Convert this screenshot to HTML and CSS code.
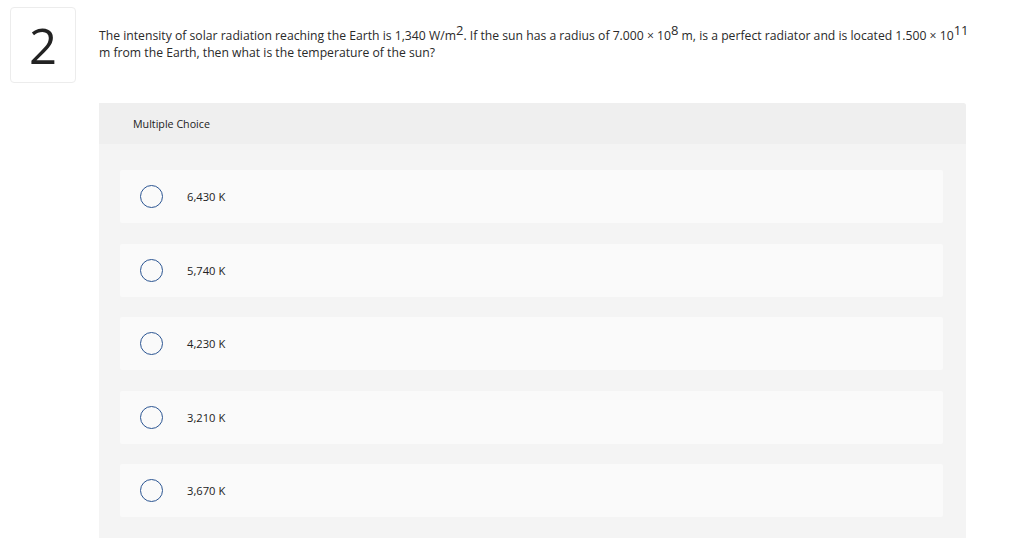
FILE: index.html
```html
<!DOCTYPE html>
<html>
<head>
<meta charset="utf-8">
<link rel="stylesheet" href="styles.css">
</head>
<body>
<div class="page">
  <div class="num">2</div>
  <div class="content">
    <p class="question">The intensity of solar radiation reaching the Earth is 1,340 W/m<sup>2</sup>. If the sun has a radius of 7.000 × 10<sup>8</sup> m, is a perfect radiator and is located 1.500 × 10<sup>11</sup> m from the Earth, then what is the temperature of the sun?</p>
    <div class="panel">
      <div class="panel-head">Multiple Choice</div>
      <div class="panel-body">
        <div class="opt"><span class="radio"></span><span class="label">6,430 K</span></div>
        <div class="opt"><span class="radio"></span><span class="label">5,740 K</span></div>
        <div class="opt"><span class="radio"></span><span class="label">4,230 K</span></div>
        <div class="opt"><span class="radio"></span><span class="label">3,210 K</span></div>
        <div class="opt"><span class="radio"></span><span class="label">3,670 K</span></div>
      </div>
    </div>
  </div>
</div>
</body>
</html>
```

FILE: styles.css
```css
html, body {
  margin: 0;
  padding: 0;
  background: #fff;
}
body {
  font-family: "Open Sans", "Liberation Sans", sans-serif;
  color: #222;
  overflow: hidden;
}
.page {
  display: flex;
  align-items: flex-start;
  padding: 7px 0 0 10px;
}
.num {
  width: 64px;
  height: 74px;
  border: 1px solid #ececec;
  border-radius: 4px;
  display: flex;
  align-items: center;
  justify-content: center;
  font-size: 49px;
  color: #222;
  font-weight: 400;
  flex: none;
}
.content {
  margin-left: 23px;
  width: 867px;
}
.question {
  margin: 20px 0 0 0;
  font-size: 12.2px;
  line-height: 17px;
  color: #2a2a2a;
  width: 872px;
}
.question sup {
  font-size: 13px;
  line-height: 0;
  vertical-align: 5px;
}
.panel {
  margin-top: 42px;
  background: #f4f4f4;
  border-radius: 0 3px 0 0;
}
.panel-head {
  height: 41px;
  background: #efefef;
  display: flex;
  align-items: center;
  padding-left: 34px;
  font-size: 10.7px;
  color: #222;
  border-radius: 0 3px 0 0;
}
.panel-body {
  display: flex;
  flex-direction: column;
  gap: 20.5px;
  padding: 26px 23px 21px 21px;
}
.opt {
  height: 53px;
  background: #fafafa;
  border-radius: 2px;
  display: flex;
  align-items: center;
  padding-left: 20px;
}
.radio {
  width: 21px;
  height: 21px;
  border: 1.3px solid #2b5592;
  border-radius: 50%;
  flex: none;
  box-sizing: content-box;
}
.label {
  margin-left: 24px;
  font-size: 11.2px;
  color: #222;
}
```
